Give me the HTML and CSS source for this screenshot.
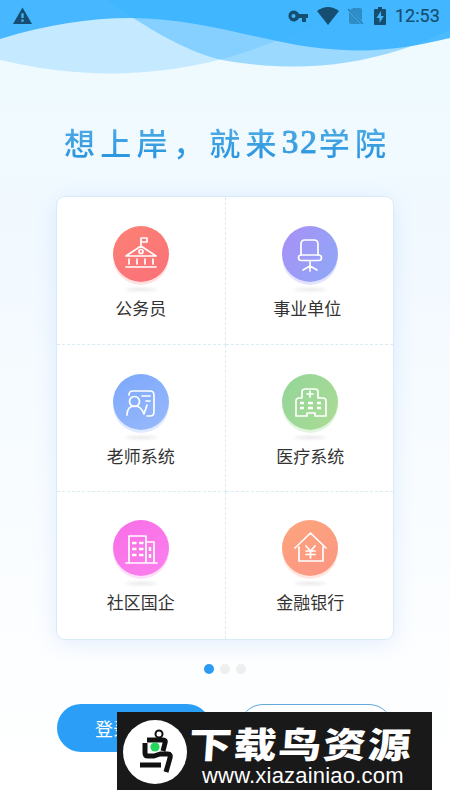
FILE: index.html
```html
<!DOCTYPE html>
<html lang="zh-CN">
<head>
<meta charset="utf-8">
<title>32学院</title>
<link rel="stylesheet" href="styles.css">
</head>
<body>
<div class="screen">
  <svg class="waves" viewBox="0 0 450 80">
    <path fill="#c5eaff" d="M0 0V60C75 78 150 78 222 59C275 45 315 22 390 0Z"/>
    <path fill="#38b2ff" fill-opacity=".45" d="M107 0C145 27 184 51 222 60C290 72 345 67 400 50C420 43 436 37 450 30V0Z"/>
    <path fill="#38b2ff" fill-opacity=".9" d="M0 0V39C45 25 90 18 130 18C197 18 250 38 310 47C365 54 400 50 450 38V0Z"/>
  </svg>
  <header class="status">
    <svg class="warn" viewBox="0 0 20 18"><path d="M10 0L20 17.5H0Z"/><path class="mark" d="M8.8 6h2.4v5H8.8zM8.8 12.7h2.4V15H8.8z"/></svg>
    <div class="status-right">
      <svg width="20" height="12" viewBox="0 0 20 12"><path fill-rule="evenodd" d="M11 4A5.5 5.5 0 1 0 11 8H14V12H18V8H20V4ZM5.5 4A2 2 0 1 1 5.5 8A2 2 0 1 1 5.5 4Z"/></svg>
      <svg class="wifi" width="22" height="18" viewBox="0 0 22 18"><path d="M0 4Q11-4 22 4L11 18Z"/></svg>
      <svg class="sim" width="17" height="18" viewBox="0 0 17 18"><path fill-opacity=".4" d="M6 1H13Q15 1 15 3V14L3 3ZM2 5L14 17H4Q2 17 2 15Z"/><path class="slash" d="M1 2L16 17"/></svg>
      <svg class="battery" width="12" height="18" viewBox="0 0 12 18"><path fill-rule="evenodd" d="M4 0H8V2H11Q12 2 12 3V17Q12 18 11 18H1Q0 18 0 17V3Q0 2 1 2H4ZM7 4L2.5 11H5.500V16L9.800 9H7Z"/></svg>
      <span class="clock">12:53</span>
    </div>
  </header>

  <h1 class="title">想上岸，就来<span class="num">32</span>学院</h1>

  <main class="card">
    <div class="cell red">
      <div class="orb"><svg viewBox="0 0 56 56"><path d="M28 20V12H34V16H28M13 30L28 20L43 30ZM16 33V38M24 33V38M32 33V38M40 33V38M13 41H43"/><circle cx="28" cy="25.5" r="2"/></svg></div>
      <span class="label">公务员</span>
    </div>
    <div class="cell purple">
      <div class="orb"><svg viewBox="0 0 56 56"><path d="M19 29V18Q19 14 23 14H32Q36 14 36 18V29"/><rect x="16.500" y="29" width="23" height="5.500" rx="2.700"/><path d="M28 35V45M28 40L21 44M28 40L35 44"/></svg></div>
      <span class="label shift-left">事业单位</span>
    </div>
    <div class="cell blue">
      <div class="orb"><svg viewBox="0 0 56 56"><path d="M16 21Q16 17 20 17H37Q41 17 41 21V38Q41 42 37 42H34M29 22H37M33 27H37M14 41Q14 32 22 32Q28 32 31 40L34 31"/><circle cx="21.500" cy="27.500" r="5"/></svg></div>
      <span class="label">老师系统</span>
    </div>
    <div class="cell green">
      <div class="orb"><svg viewBox="0 0 56 56"><path d="M20 24V18Q20 15 23 15H33Q36 15 36 18V24H41Q44 24 44 27V42H33V39H25V42H14V27Q14 24 17 24ZM28 17V23M25 20H31"/><path class="thick" d="M18 29H22M26 29H31M35 29H39M18 34H22M26 34H31M35 34H39"/></svg></div>
      <span class="label">医疗系统</span>
    </div>
    <div class="cell pink">
      <div class="orb"><svg viewBox="0 0 56 56"><path d="M13 43H44M16 43V16H33V43M33 22H41V43"/><path class="thick" d="M19 23H23.500M26 23H30.500M19 29H23.500M26 29H30.500M19 35H23.500M26 35H30.500M37 27V31M37 34V38"/></svg></div>
      <span class="label">社区国企</span>
    </div>
    <div class="cell orange">
      <div class="orb"><svg viewBox="0 0 56 56"><path d="M13 28L28.500 13L44 28M17 27V41H41V27M24 26L28.500 31L33 26M28.500 31V38M24 31H33M24 34.500H33"/></svg></div>
      <span class="label">金融银行</span>
    </div>
  </main>

  <div class="dots"><i class="dot active"></i><i class="dot"></i><i class="dot"></i></div>

  <div class="actions">
    <div class="btn primary">登录</div>
    <div class="btn outline"></div>
  </div>

  <div class="watermark">
    <svg class="bird" viewBox="0 0 64 64">
      <circle class="disc" cx="32" cy="32" r="32"/>
      <circle class="ring" cx="36" cy="14" r="3.500"/>
      <path class="stroke" d="M22 23V33Q22 36 25 36H31L37 34H45Q48 34 47 38L43 52M24 20H40Q43 20 42 23L40 31M17 45H38"/>
      <circle class="eye" cx="32" cy="27" r="4.600"/>
    </svg>
    <div class="wm-text">
      <div class="wm-name">下载鸟资源</div>
      <div class="wm-url">www.xiazainiao.com</div>
    </div>
  </div>
</div>
</body>
</html>
```
FILE: styles.css
```css
* { box-sizing: border-box; }
body { margin: 0; background: #fff; font-family: "Noto Sans CJK SC", sans-serif; }
.screen {
  position: relative;
  width: 450px;
  height: 800px;
  overflow: hidden;
  background: linear-gradient(#effaff 0, #effaff 80px, #f2f9ff 260px, #f8fcff 480px, #fdfeff 680px, #fff 800px);
}
.waves { position: absolute; top: 0; left: 0; width: 450px; height: 80px; }
.status {
  position: relative;
  display: flex;
  justify-content: space-between;
  align-items: center;
  height: 31px;
  padding: 0 10px 0 13px;
  fill: #154e70;
}
.warn { width: 19px; height: 18px; }
.warn .mark { fill: #46b7ff; }
.status-right { display: flex; align-items: center; }
.wifi { margin-left: 9px; }
.sim { margin-left: 8px; }
.slash { stroke: #2b7dae; stroke-width: 1.5; }
.battery { margin-left: 10px; }
.clock { margin-left: 9px; width: 45px; font: 400 18px/20px Roboto, sans-serif; -webkit-text-stroke: .2px #154e70; color: #154e70; white-space: nowrap; }

.title {
  display: flex;
  margin: 88px 0 0 64px;
  height: 46px;
  font: 500 31px/46px "Noto Sans CJK SC", serif;
  letter-spacing: 5.3px;
  white-space: nowrap;
  color: #3a9fe0;
  background: linear-gradient(#4dabe5 20%, #2c96df 80%);
  -webkit-background-clip: text;
  background-clip: text;
  -webkit-text-fill-color: transparent;
}
.num { font: 400 33px/47px "Liberation Serif", serif; -webkit-text-stroke: .7px #3a9fe0; letter-spacing: 2px; width: 37px; }

.card {
  display: grid;
  grid-template-columns: 168.500px 167.500px;
  grid-template-rows: 147.500px 147px 147.500px;
  width: 336px;
  height: 442px;
  margin: 32px 0 0 57px;
  background: #fff;
  border-radius: 8px;
  box-shadow: 0 0 0 1px #d9ebf6, 0 3px 22px rgba(80, 140, 240, .16);
}
.cell {
  display: flex;
  flex-direction: column;
  align-items: center;
  padding-top: 29px;
  border-bottom: 1px dashed #dcebf2;
}
.cell:nth-child(odd) { border-right: 1px dashed #dcebf2; }
.cell:nth-child(n+5) { padding-top: 28px; border-bottom: 0; }
.orb {
  position: relative;
  width: 56px;
  height: 56px;
  border-radius: 50%;
}
.orb::after {
  content: "";
  position: absolute;
  left: 12px;
  top: 62px;
  width: 32px;
  height: 3px;
  border-radius: 50%;
  background: #e6e6e6;
  filter: blur(1.500px);
}
.cell:nth-child(even) .orb { left: 1px; }
.orb svg { display: block; width: 56px; height: 56px; fill: none; stroke: #fff; stroke-width: 1.7; stroke-linecap: round; stroke-linejoin: round; }
.orb .thick { stroke-width: 2.4; stroke-linecap: butt; }
.red .orb { background: linear-gradient(150deg, #fc8174, #fa7079); box-shadow: 0 3px 0 #ffe2e1; }
.purple .orb { background: linear-gradient(120deg, #a98ff6, #8da9f6); box-shadow: 0 3px 0 #e3e2fe; }
.blue .orb { background: linear-gradient(150deg, #7da8fc, #98b9fb); box-shadow: 0 3px 0 #dfe9ff; }
.green .orb { background: linear-gradient(120deg, #92d59a, #acdb94); box-shadow: 0 3px 0 #e2f5df; }
.pink .orb { background: linear-gradient(150deg, #f86fe6, #fb80ed); box-shadow: 0 3px 0 #ffe0fa; }
.orange .orb { background: linear-gradient(150deg, #fda57d, #fb9583); box-shadow: 0 3px 0 #ffe7df; }
.label { margin-top: 13px; font-size: 17px; line-height: 26px; color: #333; }
.cell:nth-child(even) .label { position: relative; left: 1px; }
.cell:nth-child(even) .shift-left { left: -2px; }

.dots { display: flex; gap: 6px; margin: 25px 0 0 204px; }
.dot { width: 10px; height: 10px; border-radius: 50%; background: #eee; }
.dot.active { background: #2b9bf3; }

.actions { display: flex; gap: 28px; margin: 30px 0 0 57px; }
.btn { width: 154px; height: 48px; border-radius: 24px; font-size: 18px; line-height: 48px; text-align: left; }
.primary { padding-left: 38px; background: #2b9ff7; color: #fff; }
.outline { border: 1px solid #62a9dc; background: #fff; }

.watermark {
  position: absolute;
  left: 117px;
  top: 712px;
  display: flex;
  width: 315px;
  height: 78px;
  padding: 8px 0 0 6px;
  background: #191919;
  color: #fff;
}
.bird { flex: none; width: 64px; height: 64px; }
.disc { fill: #fff; }
.ring { fill: none; stroke: #111; stroke-width: 2; }
.stroke { fill: none; stroke: #111; stroke-width: 5; stroke-linejoin: round; }
.eye { fill: #24d65a; }
.wm-text { margin-left: 2px; white-space: nowrap; }
.wm-name { height: 46px; font-size: 43px; font-weight: 900; line-height: 46px; letter-spacing: 1.8px; transform: translateY(-1px) skewX(-4deg) scaleY(.83); }
.wm-url { margin: -1px 0 0 13px; font: 22px/22px "Liberation Sans", sans-serif; letter-spacing: .2px; }
```
